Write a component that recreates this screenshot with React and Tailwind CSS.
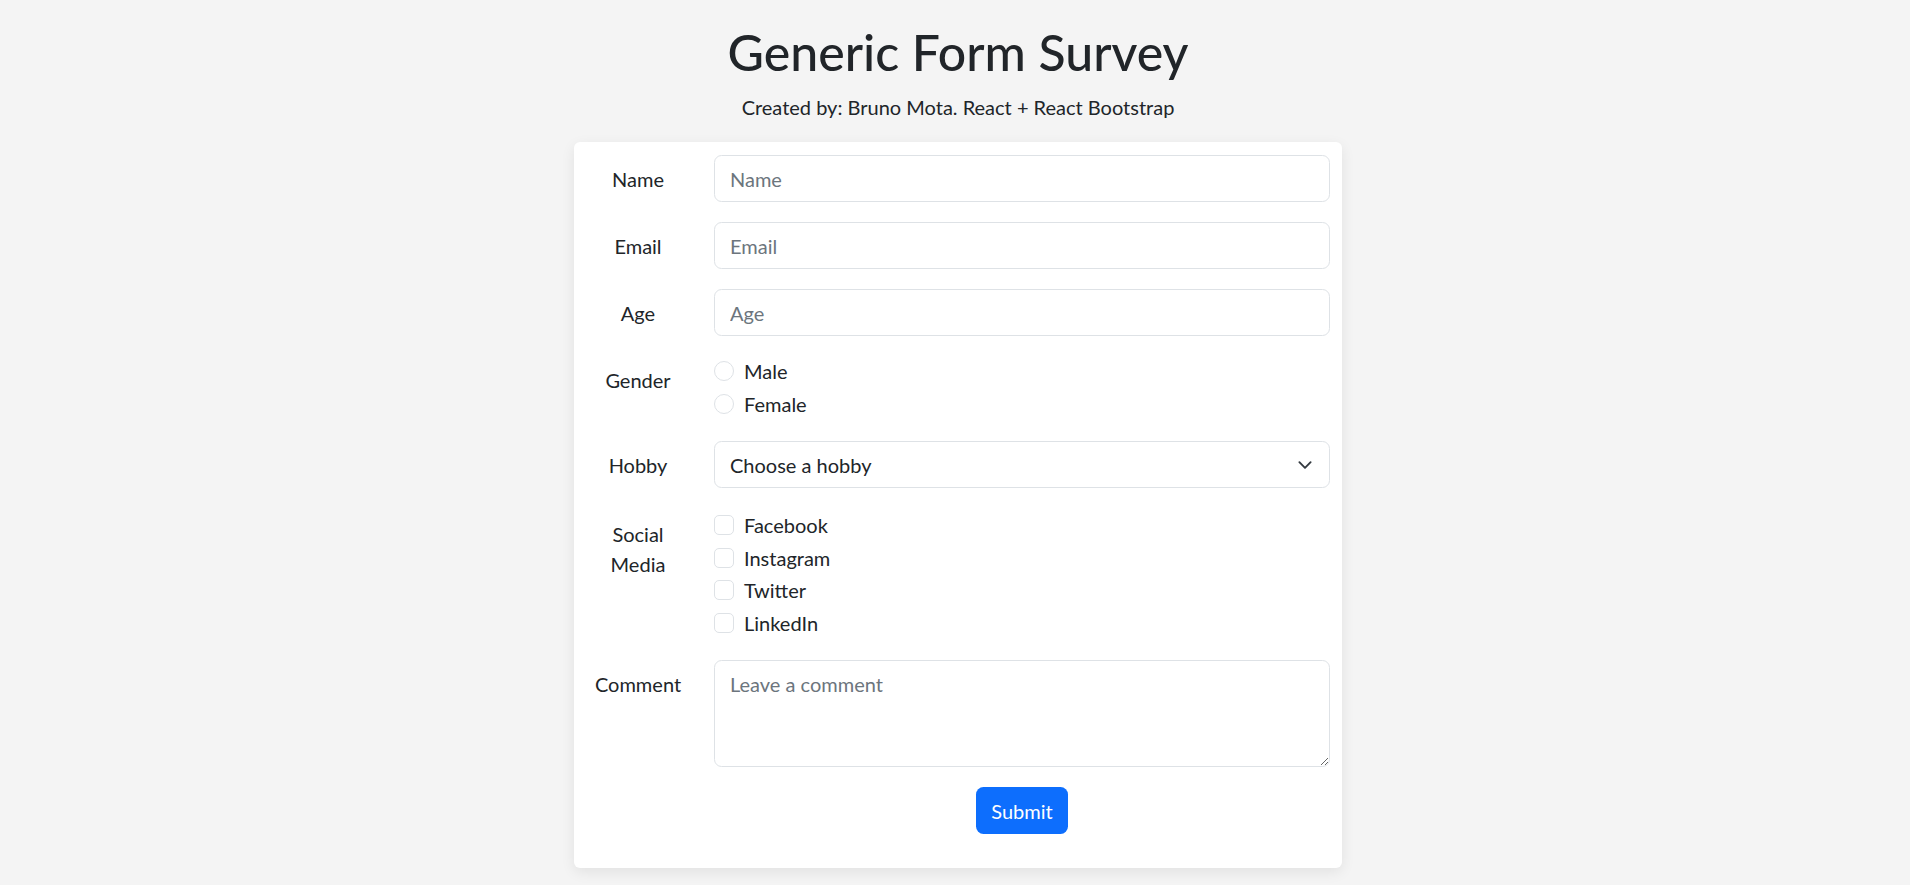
import { useState } from 'react';

const FONT = "font-['Lato',sans-serif]";

function Row({ label, children, className = '' }) {
  return (
    <div className={`flex gap-[24px] ${className}`}>
      <label className="w-[104px] shrink-0 text-center leading-[30px] pt-[8.5px]">{label}</label>
      <div className="flex-1 min-w-0">{children}</div>
    </div>
  );
}

const inputCls =
  'w-full h-[47px] px-[15px] bg-white border border-[#dee2e6] rounded-[7.5px] text-[20px] text-[#212529] placeholder:text-[#6c757d] outline-none';

function Check({ type, label, name }) {
  return (
    <label className="flex items-start h-[30px] mb-[2.5px] leading-[30px]">
      <span
        className={`mt-[5px] w-[20px] h-[20px] shrink-0 border border-[#dee2e6] bg-white ${
          type === 'radio' ? 'rounded-full' : 'rounded-[5px]'
        }`}
      />
      <input type={type} name={name} className="hidden" />
      <span className="ml-[10px]">{label}</span>
    </label>
  );
}

export default function App() {
  const [comment, setComment] = useState('');

  return (
    <div className={`min-h-screen bg-[#f4f4f4] text-[#212529] text-[20px] ${FONT}`}>
      <div className="flex flex-col items-center pt-[22px] pl-[6px]">
        <h1 className="text-[50px] leading-[60px] font-medium">Generic Form Survey</h1>
        <p className="text-[20px] leading-[30px] mt-[10px]">
          Created by: Bruno Mota. React + React Bootstrap
        </p>

        <form
          className="mt-[20px] w-[768px] bg-white rounded-[6px] shadow-[0_4px_14px_rgba(0,0,0,0.08)] px-[12px] pt-[13px] pb-[34px] flex flex-col gap-[20px]"
          onSubmit={(e) => e.preventDefault()}
        >
          <Row label="Name">
            <input className={inputCls} placeholder="Name" />
          </Row>
          <Row label="Email">
            <input className={inputCls} placeholder="Email" />
          </Row>
          <Row label="Age">
            <input className={inputCls} placeholder="Age" />
          </Row>
          <Row label="Gender">
            <Check type="radio" name="gender" label="Male" />
            <Check type="radio" name="gender" label="Female" />
          </Row>
          <Row label="Hobby">
            <div className="relative">
              <select className={`${inputCls} appearance-none pr-[45px]`} defaultValue="">
                <option value="">Choose a hobby</option>
                <option>Reading</option>
                <option>Sports</option>
                <option>Music</option>
              </select>
              <svg
                className="absolute right-[15px] top-1/2 -translate-y-1/2 pointer-events-none"
                width="20"
                height="15"
                viewBox="0 0 16 16"
                fill="none"
                stroke="#343a40"
                strokeWidth="2"
                strokeLinecap="round"
                strokeLinejoin="round"
              >
                <path d="m2 5 6 6 6-6" />
              </svg>
            </div>
          </Row>
          <Row label="Social Media" className="mt-[2px]">
            <Check type="checkbox" label="Facebook" />
            <Check type="checkbox" label="Instagram" />
            <Check type="checkbox" label="Twitter" />
            <Check type="checkbox" label="LinkedIn" />
          </Row>
          <Row label="Comment">
            <textarea
              rows={3}
              value={comment}
              onChange={(e) => setComment(e.target.value)}
              placeholder="Leave a comment"
              className="block w-full h-[107px] px-[15px] py-[7.5px] leading-[30px] bg-white border border-[#dee2e6] rounded-[7.5px] text-[20px] placeholder:text-[#6c757d] outline-none resize-y"
            />
          </Row>
          <div className="flex gap-[24px]">
            <div className="w-[104px] shrink-0" />
            <div className="flex-1 flex justify-center">
              <button
                type="submit"
                className="h-[47px] px-[15px] bg-[#0d6efd] text-white text-[20px] rounded-[7.5px]"
              >
                Submit
              </button>
            </div>
          </div>
        </form>
      </div>
    </div>
  );
}
